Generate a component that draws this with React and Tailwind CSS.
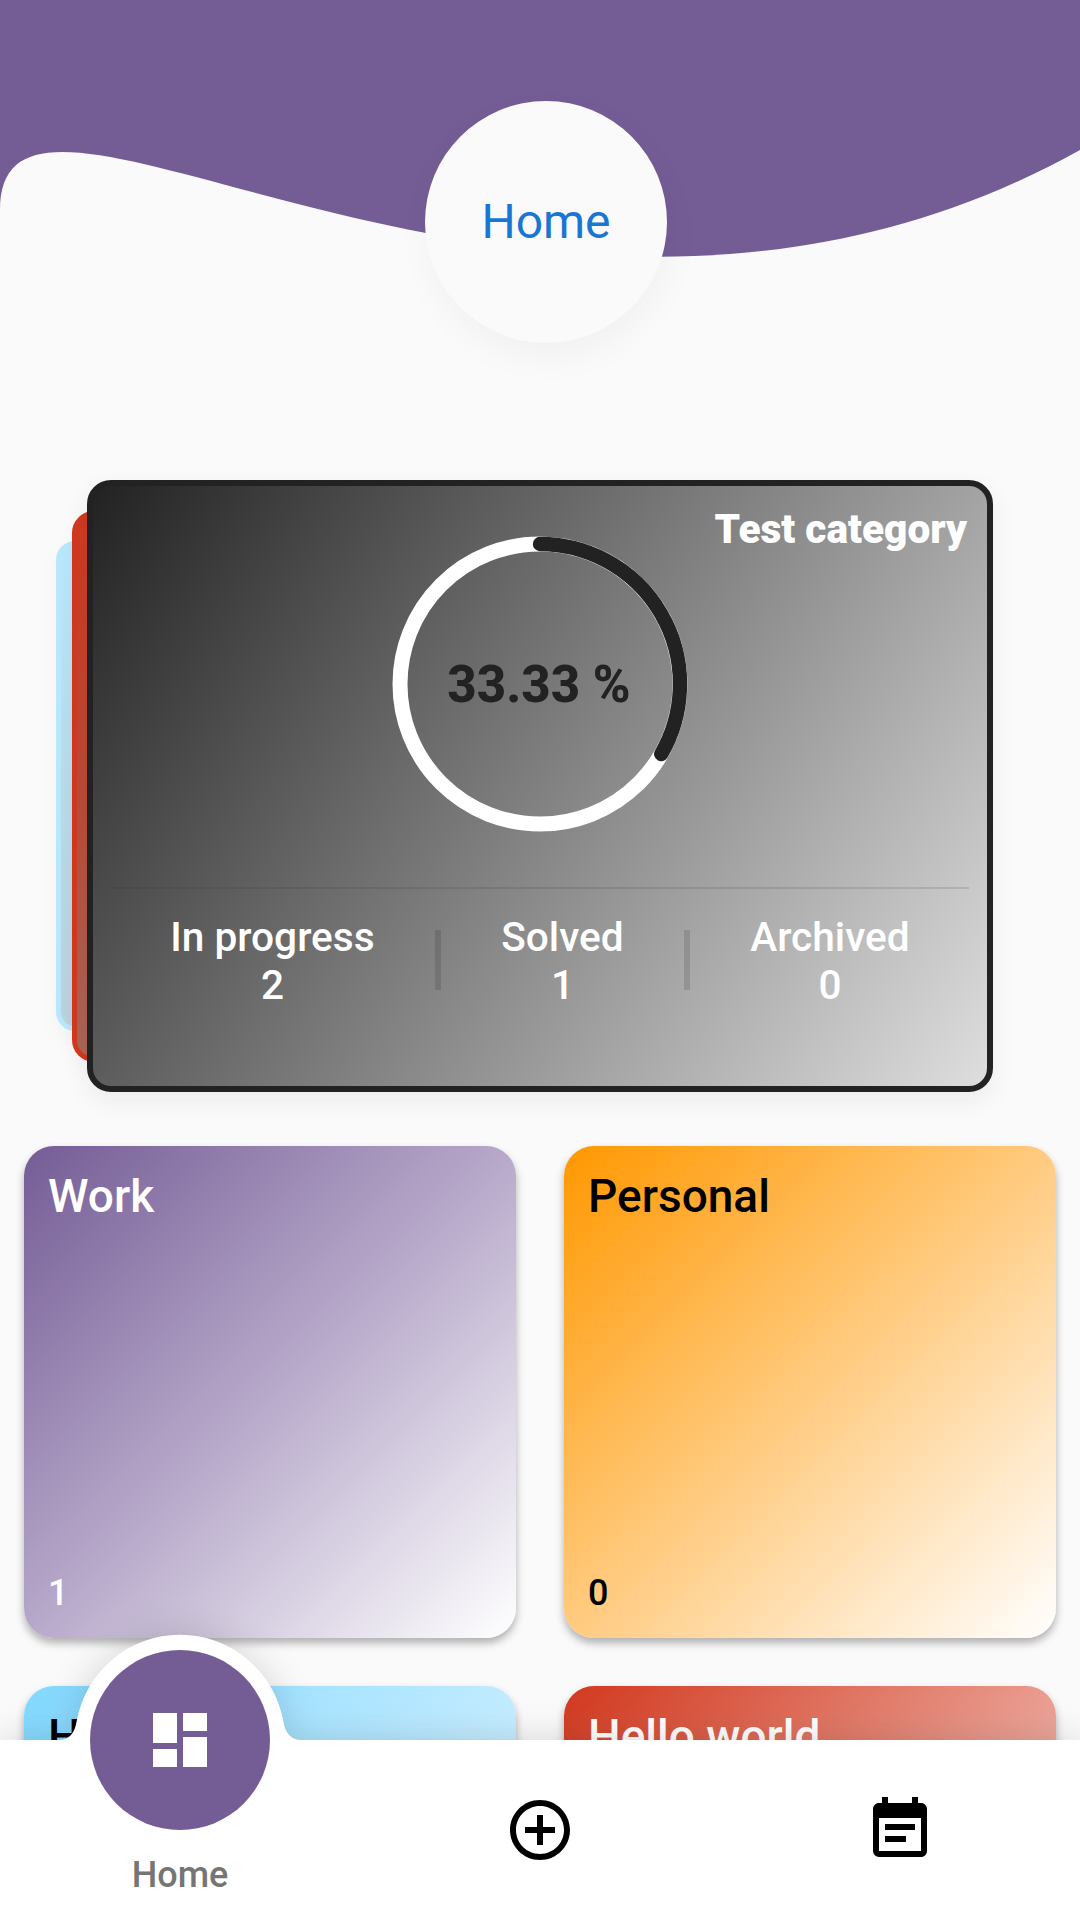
import { MdDashboard, MdAddCircleOutline, MdEventNote } from "react-icons/md";

const stats = [
  { label: "In progress", value: 2 },
  { label: "Solved", value: 1 },
  { label: "Archived", value: 0 },
];

const categories = [
  { name: "Work", count: 1, style: "text-white bg-[linear-gradient(135deg,#745c95,#b7a9ca_50%,#ffffff)]" },
  { name: "Personal", count: 0, style: "text-black bg-[linear-gradient(135deg,#ff9800,#ffcb80_50%,#ffffff)]" },
  { name: "House", count: 0, style: "text-black bg-[linear-gradient(135deg,#81d8ff,#c0ebff_50%,#ffffff)]" },
  { name: "Hello world", count: 3, style: "text-white bg-[linear-gradient(135deg,#d2381e,#e99c8f_50%,#ffffff)]" },
];

function Header() {
  return (
    <header className="relative h-[480px] shrink-0">
      <svg className="absolute left-0 top-0" width="1080" height="300" viewBox="0 0 1080 300">
        <path d="M0 0V210C0 0 540 450 1080 150V0Z" fill="#745c95" />
      </svg>
      <div className="absolute left-[425px] top-[101px] flex size-[242px] items-center justify-center rounded-full bg-[#fafafa] text-5xl text-[#1976d2] shadow-[3px_14px_36px_rgba(0,0,0,0.04)]">
        Home
      </div>
    </header>
  );
}

function ProgressRing() {
  return (
    <div className="relative flex size-[296px] items-center justify-center">
      <svg className="absolute inset-0" width="296" height="296" viewBox="-148 -148 296 296" fill="none">
        <circle r="140" stroke="#fff" strokeWidth="15" />
        <path d="M0 -140A140 140 0 0 1 121.24 70" stroke="#222" strokeWidth="14.4" strokeLinecap="round" />
      </svg>
      <span className="relative -left-px text-[51px] font-extrabold leading-none text-[#222]">33.33 %</span>
    </div>
  );
}

function Divider() {
  return <div className="mt-[17px] h-[60px] w-1.5 bg-black/12" />;
}

function SummaryStack() {
  return (
    <section className="relative mx-[87px] h-[612px] shrink-0">
      <div className="absolute -left-[31px] top-[61px] h-[490px] w-[725px] rounded-[19px] border-[5px] border-[#b9e8fc] bg-[linear-gradient(180deg,#b9e8fc,#b8dbe9_50%,#bcd2dc)] shadow-[0_9px_24px_rgba(0,0,0,0.03)]" />
      <div className="absolute -left-[15px] top-[31px] h-[551px] w-[815px] rounded-[22px] border-[5px] border-[#d0391f] bg-[linear-gradient(180deg,#d0391f,#ba4a36_50%,#a96658)] shadow-[0_9px_24px_rgba(0,0,0,0.03)]" />
      <div className="relative flex h-full flex-col rounded-3xl border-[6px] border-[#222] bg-[linear-gradient(123.9deg,#222222,#dedede)] bg-origin-padding shadow-[0_9px_27px_rgba(0,0,0,0.06)]">
        <h2 className="mr-5 mt-[19px] h-[31px] text-right text-[40.6px] font-black leading-[48px] text-white">Test category</h2>
        <div className="flex justify-center">
          <ProgressRing />
        </div>
        <div className="mx-[18px] mt-[55px] h-0.5 bg-[#323232]/14" />
        <div className="mx-[17px] mt-6 flex justify-evenly text-[40.6px] font-medium leading-[48px] text-white">
          {stats.map((s, i) => (
            <div key={s.label} className="contents">
              {i > 0 && <Divider />}
              <div className="text-center">
                <div>{s.label}</div>
                <div>{s.value}</div>
              </div>
            </div>
          ))}
        </div>
      </div>
    </section>
  );
}

function CategoryGrid() {
  return (
    <section className="mx-6 mt-[54px] grid grid-cols-2 gap-12">
      {categories.map((c) => (
        <div
          key={c.name}
          className={`flex h-[492px] flex-col justify-between rounded-[30px] px-6 pb-6 pt-[22px] font-medium shadow-[0_5px_8px_rgba(0,0,0,0.3)] ${c.style}`}
        >
          <div className="text-[46px] leading-[56px]">{c.name}</div>
          <div className="text-[36px] leading-[42px]">{c.count}</div>
        </div>
      ))}
    </section>
  );
}

function BottomNav() {
  return (
    <nav className="absolute inset-x-0 bottom-0 h-[180px]">
      <svg
        className="absolute bottom-0 left-0 overflow-visible drop-shadow-[0_0_18px_rgba(0,0,0,0.15)]"
        width="1080"
        height="285"
        viewBox="0 1635 1080 285"
      >
        <path
          d="M0 1740H60Q74 1739 76.7 1721A105 105 0 0 1 283.3 1721Q286 1739 300 1740H1080V1920H0Z"
          fill="#fff"
        />
      </svg>
      <div className="relative grid h-full grid-cols-3 justify-items-center">
        <div className="flex flex-col items-center">
          <div className="-mt-[90px] flex size-[180px] items-center justify-center rounded-full bg-[#745c95]">
            <MdDashboard className="size-[72px] text-white" />
          </div>
          <span className="mt-6 text-[36px] font-medium leading-[42px] text-[#757575]">Home</span>
        </div>
        <MdAddCircleOutline className="mt-[54px] size-[72px] text-black" />
        <MdEventNote className="mt-[54px] size-[72px] text-black" />
      </div>
    </nav>
  );
}

export default function App() {
  return (
    <main className="relative flex h-[1920px] w-[1080px] flex-col overflow-hidden bg-[#fafafa] font-['Roboto',sans-serif]">
      <Header />
      <SummaryStack />
      <CategoryGrid />
      <BottomNav />
    </main>
  );
}
